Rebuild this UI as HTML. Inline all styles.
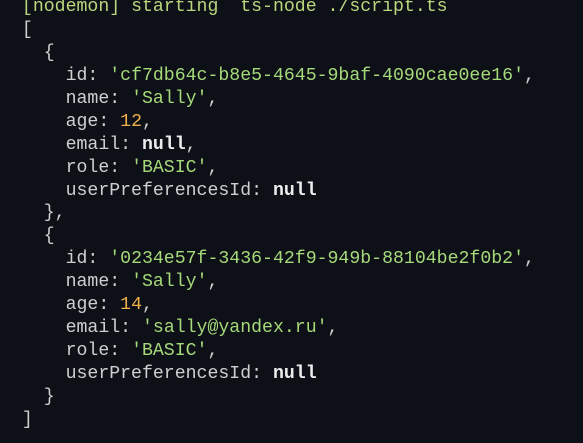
<!DOCTYPE html>
<html><head><meta charset="utf-8"><style>
html,body{margin:0;padding:0;background:#0d1017;width:583px;height:443px;overflow:hidden}
pre{margin:0;position:absolute;left:11px;top:-4px;font-family:"Liberation Mono",monospace;font-size:18.2px;line-height:22.94px;color:#cfcfcf;white-space:pre}
.h{color:#b9d67c}
.s{color:#a6d97a}
.n{color:#f2b04c}
.b{color:#ececec;font-weight:bold}
</style></head><body><pre> <span class="h">[nodemon] starting  ts-node ./script.ts</span>
 [
   {
     id: <span class="s">'cf7db64c-b8e5-4645-9baf-4090cae0ee16'</span>,
     name: <span class="s">'Sally'</span>,
     age: <span class="n">12</span>,
     email: <span class="b">null</span>,
     role: <span class="s">'BASIC'</span>,
     userPreferencesId: <span class="b">null</span>
   },
   {
     id: <span class="s">'0234e57f-3436-42f9-949b-88104be2f0b2'</span>,
     name: <span class="s">'Sally'</span>,
     age: <span class="n">14</span>,
     email: <span class="s">'sally@yandex.ru'</span>,
     role: <span class="s">'BASIC'</span>,
     userPreferencesId: <span class="b">null</span>
   }
 ]</pre></body></html>
